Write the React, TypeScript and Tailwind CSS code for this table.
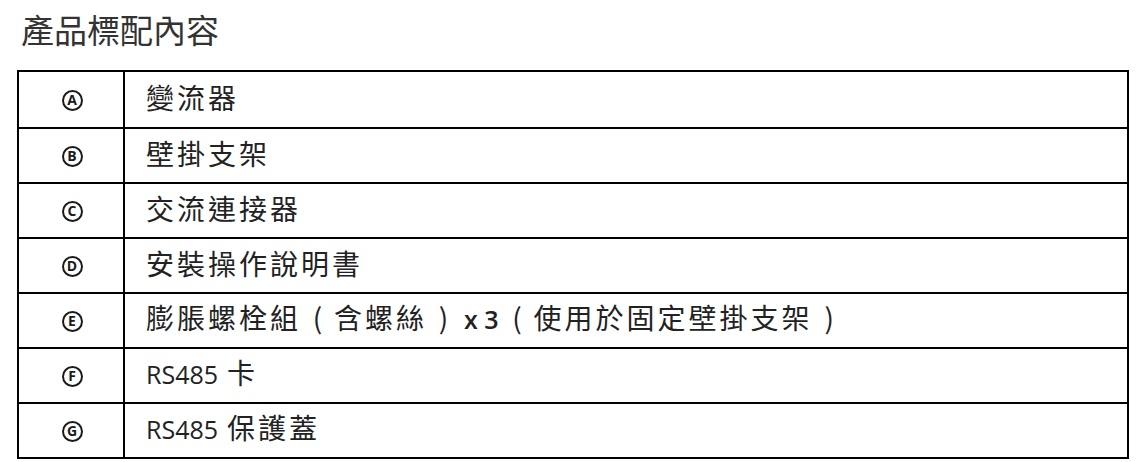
const P = ({ c }: { c: string }) => (
  <span className="inline-block w-[33px] text-center tracking-normal">{c}</span>
);

// 圓圈字母標記
const Mark = ({ c }: { c: string }) => (
  <div className="w-[21px] h-[21px] shrink-0 rounded-full border-[2.5px] border-[#1a1a1a] flex items-center justify-center">
    <span className="text-[14px] leading-none font-bold tracking-normal text-[#1a1a1a] font-['Open_Sans',sans-serif]">
      {c}
    </span>
  </div>
);

const items: { mark: string; label: React.ReactNode }[] = [
  { mark: 'A', label: '變流器' },
  { mark: 'B', label: '壁掛支架' },
  { mark: 'C', label: '交流連接器' },
  { mark: 'D', label: '安裝操作說明書' },
  {
    mark: 'E',
    label: (
      <>
        膨脹螺栓組<P c="(" />含螺絲<P c=")" />
        <span className="latin ml-[4px] mr-[2px] tracking-normal font-semibold">x 3</span>
        <P c="(" />使用於固定壁掛支架<P c=")" />
      </>
    ),
  },
  {
    mark: 'F',
    label: (
      <>
        <span className="latin tracking-normal mr-[9px]">RS485</span>卡
      </>
    ),
  },
  {
    mark: 'G',
    label: (
      <>
        <span className="latin tracking-normal mr-[9px]">RS485</span>保護蓋
      </>
    ),
  },
];

export default function App() {
  return (
    <div className="w-[1140px] h-[462px] bg-white text-[#222] font-['Open_Sans','Noto_Sans_CJK_TC',sans-serif]">
      <style>{`.latin{font-family:'Open Sans','Noto Sans CJK TC',sans-serif;font-size:25px;}`}</style>
      <h1 className="pl-[21px] pt-[9px] h-[70px] text-[33px] leading-[40px] text-[#333] font-['Noto_Sans_CJK_TC',sans-serif] font-normal">
        產品標配內容
      </h1>

      {/* 內容表 */}
      <div className="ml-[17px] w-[1112px] border-2 border-black">
        {items.map((item, i) => (
          <div
            key={i}
            className={`grid grid-cols-[106px_1fr] h-[55px] ${i > 0 ? 'border-t-2 border-black' : ''}`}
          >
            <div className="border-r-2 border-black flex items-center justify-center pt-[1px] pl-[2px]">
              <Mark c={item.mark} />
            </div>
            <div className="pl-[21px] flex items-center pb-[6px] text-[28px] tracking-[3px] font-['Noto_Sans_CJK_TC',sans-serif] whitespace-nowrap">
              <span>{item.label}</span>
            </div>
          </div>
        ))}
      </div>
    </div>
  );
}
